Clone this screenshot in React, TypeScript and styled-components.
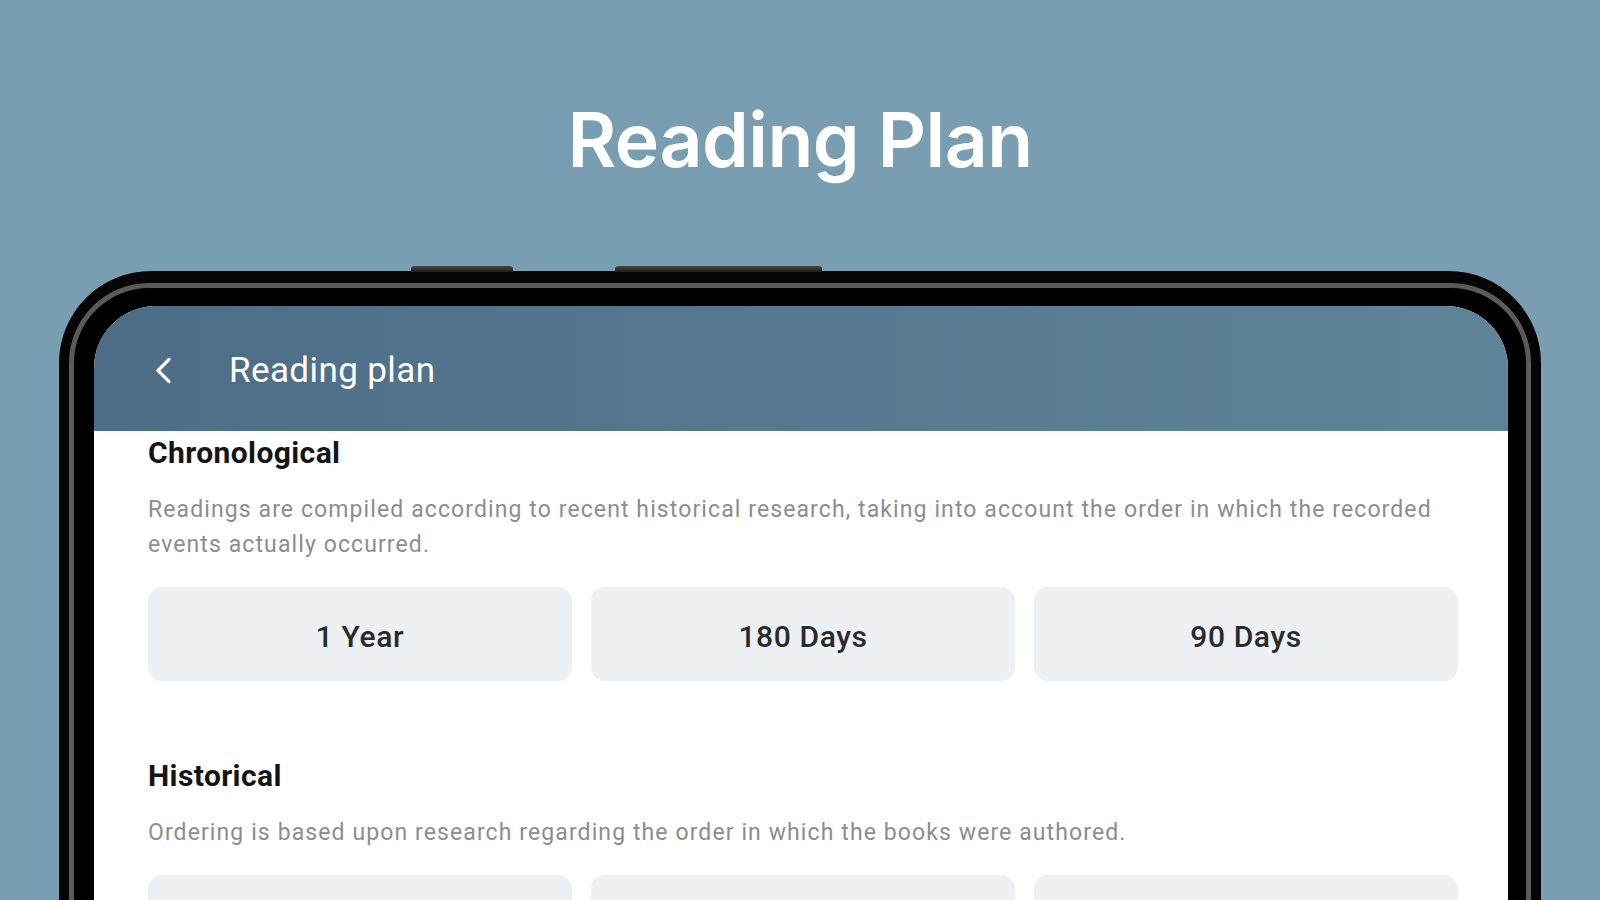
import styled, { createGlobalStyle } from "styled-components";

const GlobalStyle = createGlobalStyle`
	html, body {
		margin: 0;
		padding: 0;
		height: 100%;
		overflow: hidden;
		background: #7a9eb1;
	}

	#root {
		height: 100vh;
		overflow: hidden;
	}
`;

const Page = styled.div`
	display: flex;
	flex-direction: column;
	align-items: center;
	padding-top: 100px;
	font-family: Roboto, "Liberation Sans", sans-serif;
`;

const Heading = styled.h1`
	margin: 0;
	font-family: Inter, "Noto Sans", sans-serif;
	font-size: 75px;
	line-height: 80px;
	font-weight: 600;
	letter-spacing: -0.5px;
	color: #ffffff;
`;

const Device = styled.div`
	position: relative;
	width: 1482px;
	margin-top: 91px;
	padding: 12px 10px 0;
	box-sizing: border-box;
	background: #050505;
	border-radius: 92px 92px 0 0;
`;

const SideKey = styled.span<{ $left: number; $width: number }>`
	position: absolute;
	top: -5px;
	left: ${({ $left }) => $left}px;
	width: ${({ $width }) => $width}px;
	height: 6px;
	border-radius: 3px 3px 0 0;
	background: linear-gradient(to bottom, #4a4a4a, #1c1c1c);
`;

const Rim = styled.div`
	border: 5px solid #5a5a5a;
	border-bottom: none;
	border-radius: 80px 80px 0 0;
	background: #000;
	padding: 18px 18px 0 20px;
	height: 640px;
`;

const Screen = styled.div`
	height: 100%;
	background: #ffffff;
	border-radius: 62px 62px 0 0;
	overflow: hidden;
`;

const AppBar = styled.header`
	display: flex;
	align-items: center;
	height: 125px;
	padding: 4px 0 0 59px;
	box-sizing: border-box;
	background: linear-gradient(90deg, #4c6d85 0%, #557790 45%, #5f8497 100%);
	color: #ffffff;
`;

const BackButton = styled.button`
	display: flex;
	align-items: center;
	justify-content: center;
	width: 20px;
	height: 30px;
	padding: 0;
	border: none;
	background: none;
	color: #ffffff;
	cursor: pointer;
`;

const AppBarTitle = styled.span`
	margin-left: 56px;
	font-size: 35px;
	font-weight: 400;
	letter-spacing: 0.4px;
`;

const Content = styled.main`
	padding: 4px 50px 0 54px;
`;

const Section = styled.section`
	& + & {
		margin-top: 77px;
	}
`;

const SectionTitle = styled.h2`
	margin: 0;
	font-size: 30px;
	line-height: 36px;
	font-weight: 700;
	letter-spacing: 0.4px;
	color: #141414;
`;

const SectionText = styled.p`
	margin: 21px 0 0;
	font-size: 23px;
	line-height: 35px;
	letter-spacing: 1.1px;
	color: #8d8d8d;
`;

const Options = styled.div`
	display: grid;
	grid-template-columns: repeat(3, 1fr);
	gap: 19px;
	margin-top: 25px;
`;

const Option = styled.button`
	height: 94px;
	padding: 4px 0 0;
	border: none;
	border-radius: 14px;
	background: #edf1f4;
	font-family: Roboto, "Liberation Sans", sans-serif;
	font-size: 30px;
	font-weight: 500;
	letter-spacing: 0.6px;
	color: #2a2a2a;
	cursor: pointer;
`;

const plans = [
	{
		title: "Chronological",
		text: "Readings are compiled according to recent historical research, taking into account the order in which the recorded events actually occurred.",
	},
	{
		title: "Historical",
		text: "Ordering is based upon research regarding the order in which the books were authored.",
	},
];

const durations = ["1 Year", "180 Days", "90 Days"];

export default function App() {
	return (
		<>
			<GlobalStyle />
			<Page>
				<Heading>Reading Plan</Heading>
				<Device>
					<SideKey $left={352} $width={102} />
					<SideKey $left={556} $width={207} />
					<Rim>
						<Screen>
							<AppBar>
								<BackButton aria-label="Back">
									<svg width="18" height="27" viewBox="0 0 18 27" fill="none">
										<path d="M15 2.5 L4 13.5 L15 24.5" stroke="currentColor" strokeWidth="3.2" strokeLinecap="round" strokeLinejoin="round" />
									</svg>
								</BackButton>
								<AppBarTitle>Reading plan</AppBarTitle>
							</AppBar>
							<Content>
								{plans.map((plan) => (
									<Section key={plan.title}>
										<SectionTitle>{plan.title}</SectionTitle>
										<SectionText>{plan.text}</SectionText>
										<Options>
											{durations.map((d) => (
												<Option key={d}>{d}</Option>
											))}
										</Options>
									</Section>
								))}
							</Content>
						</Screen>
					</Rim>
				</Device>
			</Page>
		</>
	);
}
